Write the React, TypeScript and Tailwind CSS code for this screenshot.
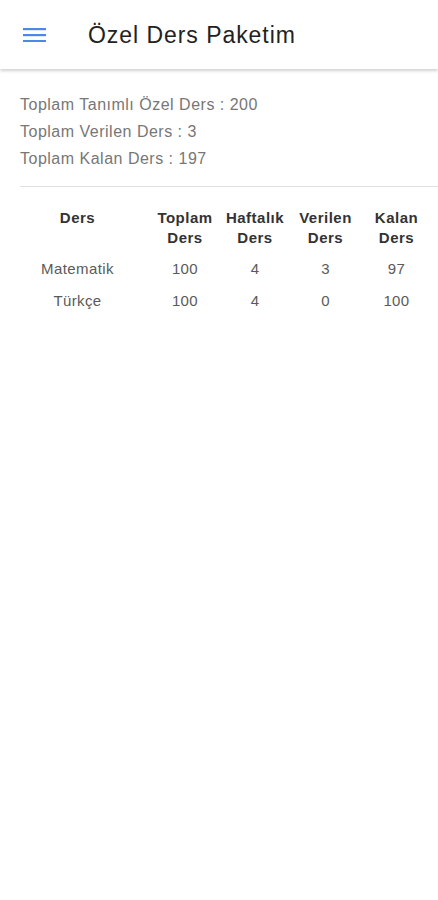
const stats = [
  'Toplam Tanımlı Özel Ders : 200',
  'Toplam Verilen Ders : 3',
  'Toplam Kalan Ders : 197',
]

const rows = [
  { ders: 'Matematik', toplam: 100, haftalik: 4, verilen: 3, kalan: 97 },
  { ders: 'Türkçe', toplam: 100, haftalik: 4, verilen: 0, kalan: 100 },
]

const cols = 'grid grid-cols-[115px_15px_70px_70px_71px_71px]'

export default function App() {
  return (
    <div className="min-h-[900px] bg-white font-['Liberation_Sans',Arial,sans-serif]">
      <header className="h-[69px] flex items-center bg-white shadow-[0_2px_3px_rgba(0,0,0,0.18)]">
        <svg className="ml-[23px] w-[23px] h-[14px]" viewBox="0 0 23 14" fill="none">
          <rect x="0" y="0" width="23" height="2.2" fill="#4a89e8" />
          <rect x="0" y="6" width="23" height="2.2" fill="#4a89e8" />
          <rect x="0" y="12" width="23" height="2.2" fill="#4a89e8" />
        </svg>
        <h1 className="ml-[42px] mt-[2px] text-[23px] tracking-[0.95px] text-[#222222] leading-none">
          Özel Ders Paketim
        </h1>
      </header>

      <div className="pl-[20px] pt-[22px]">
        <div className="text-[16px] tracking-[0.5px] text-[#777777] leading-[27px]">
          {stats.map((s) => (
            <p key={s}>{s}</p>
          ))}
        </div>
        <div className="mt-[14px] h-px bg-[#e0e0e0]" />

        <div className="mt-[21px] w-[412px]">
          <div className={`${cols} text-[15px] tracking-[0.5px] font-bold text-[#333333] leading-[20px] text-center`}>
            <div>Ders</div>
            <div />
            <div>Toplam<br />Ders</div>
            <div>Haftalık<br />Ders</div>
            <div>Verilen<br />Ders</div>
            <div>Kalan<br />Ders</div>
          </div>
          <div className="mt-[5px]">
            {rows.map((r) => (
              <div
                key={r.ders}
                className={`${cols} text-[15px] tracking-[0.4px] text-[#5a5a5a] leading-[32px] text-center`}
              >
                <div>{r.ders}</div>
                <div />
                <div>{r.toplam}</div>
                <div>{r.haftalik}</div>
                <div>{r.verilen}</div>
                <div>{r.kalan}</div>
              </div>
            ))}
          </div>
        </div>
      </div>
    </div>
  )
}
